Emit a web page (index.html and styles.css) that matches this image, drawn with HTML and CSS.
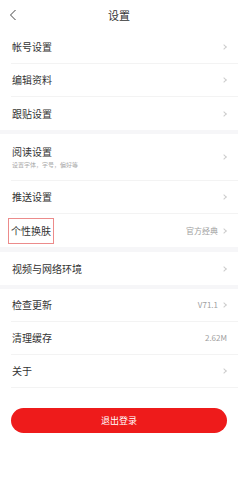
FILE: index.html
```html
<!DOCTYPE html>
<html lang="zh-CN">
<head>
<meta charset="utf-8">
<title>设置</title>
<link rel="stylesheet" href="styles.css">
</head>
<body>
<div class="page">
  <header class="topbar">
    <svg class="back" width="8" height="12" viewBox="0 0 8 12"><path d="M6.5 1 L1.5 6 L6.5 11" fill="none" stroke="#444" stroke-width="1"/></svg>
    <div class="title">设置</div>
  </header>

  <section class="group">
    <div class="row"><span class="label">帐号设置</span><span class="right"><i class="chev"></i></span></div>
    <div class="row"><span class="label">编辑资料</span><span class="right"><i class="chev"></i></span></div>
    <div class="row last"><span class="label">跟贴设置</span><span class="right"><i class="chev"></i></span></div>
  </section>
  <div class="gap"></div>
  <section class="group">
    <div class="row tall"><span class="labels"><span class="label">阅读设置</span><span class="sub">设置字体，字号，偏好等</span></span><span class="right"><i class="chev"></i></span></div>
    <div class="row"><span class="label">推送设置</span><span class="right"><i class="chev"></i></span></div>
    <div class="row last"><span class="label boxed">个性换肤</span><span class="right"><span class="value">官方经典</span><i class="chev"></i></span></div>
  </section>
  <div class="gap gap5"></div>
  <section class="group">
    <div class="row last"><span class="label">视频与网络环境</span><span class="right"><i class="chev"></i></span></div>
  </section>
  <div class="gap"></div>
  <section class="group">
    <div class="row"><span class="label">检查更新</span><span class="right"><span class="value">V71.1</span><i class="chev"></i></span></div>
    <div class="row"><span class="label">清理缓存</span><span class="right"><span class="value">2.62M</span></span></div>
    <div class="row"><span class="label">关于</span><span class="right"><i class="chev"></i></span></div>
  </section>

  <div class="btnwrap"><button class="logout">退出登录</button></div>
</div>
</body>
</html>
```
FILE: styles.css
```css
* { box-sizing: border-box; }
html, body { margin: 0; padding: 0; background: #fff; }
body { font-family: "Noto Sans CJK SC", "Noto Sans", sans-serif; color: #333; }
.page { width: 238px; }
.topbar { height: 31px; display: flex; align-items: center; justify-content: center; position: relative; }
.back { position: absolute; left: 9px; top: 9px; }
.title { font-size: 11px; color: #333; line-height: 1; }
.group { display: flex; flex-direction: column; }
.row { height: 33px; margin-left: 11px; padding: 0 11px 0 1px; border-bottom: 1px solid #f3f3f3; display: flex; align-items: center; justify-content: space-between; }
.row.last { border-bottom: none; }
.row.tall { height: 47px; }
.labels { display: flex; flex-direction: column; gap: 3px; }
.label { font-size: 10px; line-height: 12px; color: #333; }
.sub { font-size: 6px; line-height: 7px; color: #aaa; }
.boxed { outline: 1px solid #ec8b8b; outline-offset: 0; padding: 6px 2px; margin-left: -3px; }
.right { display: flex; align-items: center; gap: 4px; }
.value { font-size: 8px; color: #a0a0a0; line-height: 10px; }
.chev { display: inline-block; width: 4px; height: 4px; border-top: 1px solid #ccc; border-right: 1px solid #ccc; transform: rotate(45deg); margin-right: 1px; }
.gap { height: 4px; background: #f6f6f8; }
.gap5 { height: 5px; }
.btnwrap { padding: 20px 11px 0; }
.logout { display: block; width: 100%; height: 25px; border: none; border-radius: 13px; background: #ee1b1b; color: #fff; font-family: "Noto Sans CJK SC", sans-serif; font-size: 9px; }
```
